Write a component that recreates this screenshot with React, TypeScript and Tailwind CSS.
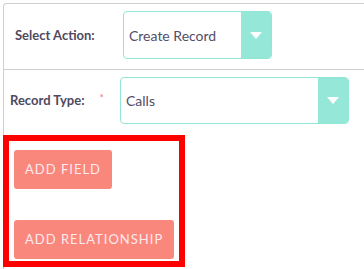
import React from 'react';

// Select box with the teal arrow block on its right
function TealSelect({ value, width, height }: { value: string; width: string; height: string }) {
  return (
    <div
      className={`flex ${width} ${height} rounded-[4px] border border-[#92e6d5] bg-white overflow-hidden`}
    >
      <div className="flex-1 flex items-center pl-[5px] text-[14px] text-[#534d64]">{value}</div>
      <div className="w-[30px] bg-[#95e7d7] flex items-center justify-center">
        <div className="w-0 h-0 border-l-[6px] border-r-[6px] border-t-[7px] border-l-transparent border-r-transparent border-t-white" />
      </div>
    </div>
  );
}

function ActionButton({ label }: { label: string }) {
  return (
    <button className="h-[39px] px-[11px] rounded-[3px] bg-[#fa877c] text-[13px] tracking-[1px] text-[#fde9f0] uppercase">
      {label}
    </button>
  );
}

export default function App() {
  return (
    <div
      className="w-[364px] h-[269px] overflow-hidden bg-white pt-[3px] pl-[3px]"
      style={{ fontFamily: 'Lato, "Noto Sans", sans-serif' }}
    >
      <div className="w-[420px] h-[300px] border-t border-l border-[#cfcfcf] rounded-tl-[4px]">
        {/* Select Action row */}
        <div className="h-[66px] pt-[7px] border-b border-[#cfcfcf]">
          <div className="flex items-center">
            <div className="w-[119px] pl-[11px] pt-[1px] text-[13px] font-bold text-[#4f4a60]">
              Select Action:
            </div>
            <TealSelect value="Create Record" width="w-[149px]" height="h-[48px]" />
          </div>
        </div>

        {/* Record Type row */}
        <div className="h-[65px] pt-[7px]">
          <div className="flex items-center">
            <div className="w-[116px] pl-[6px] pt-[1px] flex items-center text-[13px] font-bold text-[#4f4a60]">
              <span>Record Type:</span>
              <span className="ml-[15px] -mt-[8px] text-[10px] text-[#f28b8b]">*</span>
            </div>
            <TealSelect value="Calls" width="w-[229px]" height="h-[47px]" />
          </div>
        </div>

        {/* Highlighted buttons */}
        <div className="-ml-[1px] w-[182px] h-[132px] border-[6px] border-[#ff0000] pt-[9px] pl-[5px] flex flex-col items-start gap-[31px]">
          <ActionButton label="Add Field" />
          <ActionButton label="Add Relationship" />
        </div>
      </div>
    </div>
  );
}
